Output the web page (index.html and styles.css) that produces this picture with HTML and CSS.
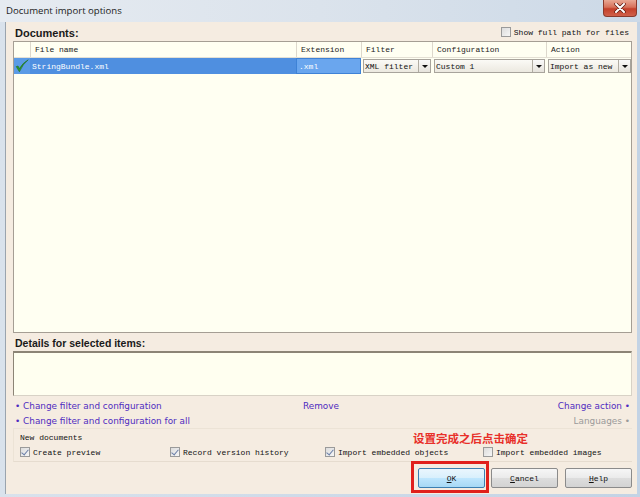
FILE: index.html
```html
<!DOCTYPE html>
<html>
<head>
<meta charset="utf-8">
<link rel="stylesheet" href="styles.css">
</head>
<body>
<div class="window">
  <div class="titlebar">
    <span class="title">Document import options</span>
    <div class="close">
      <svg width="14" height="10" viewBox="0 0 14 10"><path d="M3 1 L11 9 M11 1 L3 9" stroke="#5a1a10" stroke-width="3.4" stroke-linecap="round"/><path d="M3 1 L11 9 M11 1 L3 9" stroke="#fff" stroke-width="2" stroke-linecap="round"/></svg>
    </div>
  </div>
  <div class="client">
    <div class="docs-head">
      <span class="section-label">Documents:</span>
      <span class="chk"><span class="box"></span><span class="mono">Show full path for files</span></span>
    </div>
    <div class="table">
      <div class="row thead">
        <div class="cell"></div>
        <div class="cell"><span class="hd">File name</span></div>
        <div class="cell"><span class="hd">Extension</span></div>
        <div class="cell"><span class="hd">Filter</span></div>
        <div class="cell"><span class="hd">Configuration</span></div>
        <div class="cell"><span class="hd">Action</span></div>
      </div>
      <div class="row sel">
        <div class="cell icon">
          <svg width="14" height="14" viewBox="0 0 14 14"><path d="M1.2 7.6 L4.4 12.8 Q7.8 5 13.2 0.8 Q7.4 4.2 4.5 9.6 L3 7 Z" fill="#2f9a2a" stroke="#1f6e1c" stroke-width="0.6"/></svg>
        </div>
        <div class="cell name"><span class="mono">StringBundle.xml</span></div>
        <div class="cell ext"><span class="mono">.xml</span></div>
        <div class="cell"><div class="combo"><span class="mono">XML filter</span><span class="arrow"></span></div></div>
        <div class="cell"><div class="combo"><span class="mono">Custom 1</span><span class="arrow"></span></div></div>
        <div class="cell"><div class="combo"><span class="mono">Import as new</span><span class="arrow"></span></div></div>
      </div>
    </div>
    <div class="details-label section-label">Details for selected items:</div>
    <div class="details"></div>
    <div class="links">
      <div class="link-row">
        <span class="link">• Change filter and configuration</span>
        <span class="link remove">Remove</span>
        <span class="link right">Change action •</span>
      </div>
      <div class="link-row">
        <span class="link">• Change filter and configuration for all</span>
        <span class="link right muted">Languages •</span>
      </div>
    </div>
    <div class="group">
      <div class="group-title mono">New documents</div>
      <div class="group-row">
        <span class="chk c1"><span class="box on"></span><span class="mono">Create preview</span></span>
        <span class="chk c2"><span class="box on"></span><span class="mono">Record version history</span></span>
        <span class="chk c3"><span class="box on"></span><span class="mono">Import embedded objects</span></span>
        <span class="chk c4"><span class="box"></span><span class="mono">Import embedded images</span></span>
      </div>
    </div>
    <div class="buttons">
      <div class="btn default"><span class="mono"><u>O</u>K</span></div>
      <div class="btn"><span class="mono"><u>C</u>ancel</span></div>
      <div class="btn"><span class="mono"><u>H</u>elp</span></div>
    </div>
  </div>
  <div class="note">设置完成之后点击确定</div>
  <div class="redbox"></div>
</div>
</body>
</html>
```
FILE: styles.css
```css
html, body {
  margin: 0;
  padding: 0;
}
body {
  width: 640px;
  height: 497px;
  overflow: hidden;
  background: #c9d6e4;
}
.window {
  position: relative;
  width: 640px;
  height: 497px;
  background: linear-gradient(to right, #d9e2ec, #c3d3e5);
  display: flex;
  flex-direction: column;
}
.titlebar {
  height: 22px;
  display: flex;
  align-items: flex-start;
  justify-content: space-between;
  background: linear-gradient(to right, #e6ebf1 0%, #dbe3ec 50%, #ccd9e7 100%);
}
.title {
  font-family: "Open Sans", "DejaVu Sans", sans-serif;
  font-size: 9.6px;
  color: #1c1c1c;
  margin: 4px 0 0 6px;
}
.close {
  width: 34px;
  height: 17px;
  margin-right: 3px;
  box-sizing: border-box;
  border: 1px solid #8a3a2c;
  border-top: none;
  border-radius: 0 0 4px 4px;
  background: linear-gradient(to bottom, #e9a894 0%, #d7715a 45%, #c4402a 55%, #d0604a 100%);
  display: flex;
  align-items: center;
  justify-content: center;
}
.client {
  flex: 1;
  margin: 0 3px 3px 5px;
  padding: 0 5px 0 7px;
  background: #f5ece1;
  border-left: 1px solid #9aa4ae;
  display: flex;
  flex-direction: column;
  box-sizing: border-box;
}
.mono {
  font-family: "Liberation Mono", "DejaVu Sans Mono", monospace;
  font-size: 8px;
  color: #111;
  white-space: pre;
}
.section-label {
  font-family: "Liberation Sans", Arial, sans-serif;
  font-weight: bold;
  font-size: 11px;
  color: #1a1a1a;
}
.docs-head {
  height: 19px;
  display: flex;
  align-items: center;
  justify-content: space-between;
  padding: 0 0 0 2px;
}
.docs-head .section-label {
  margin-top: 2px;
}
.docs-head .chk {
  margin-right: 3px;
  margin-top: 1px;
}
.chk {
  display: inline-flex;
  align-items: center;
  gap: 3px;
}
.box {
  width: 10px;
  height: 10px;
  box-sizing: border-box;
  border: 1px solid #9a9a9a;
  background: linear-gradient(135deg, #dcdcdc, #f6f6f6);
  position: relative;
}
.box.on::after {
  content: "";
  position: absolute;
  left: 2px;
  top: 0px;
  width: 3px;
  height: 6px;
  border: solid #6b7fa8;
  border-width: 0 1.5px 1.5px 0;
  transform: rotate(40deg);
}
.table {
  height: 292px;
  box-sizing: border-box;
  border: 1px solid #a59e94;
  background: #fffff2;
}
.row {
  display: grid;
  grid-template-columns: 16px 266px 65px 71px 114px 86px;
}
.thead {
  height: 15px;
  border-bottom: 1px solid #e4e0d4;
}
.thead .cell {
  border-left: 1px solid #ddd8cc;
  display: flex;
  align-items: center;
}
.thead .cell:first-child {
  border-left: none;
}
.hd {
  font-family: "Liberation Mono", monospace;
  font-size: 8px;
  color: #222;
  padding-left: 4px;
}
.sel {
  height: 16px;
}
.sel .cell {
  display: flex;
  align-items: center;
}
.sel .icon,
.sel .name {
  background: #4f8fe0;
}
.sel .icon {
  justify-content: center;
  background: #5b9be6;
}
.sel .name .mono {
  color: #fff;
  padding-left: 2px;
}
.sel .ext {
  background: #6aa6ee;
  border: 1px solid #3e82d6;
  box-sizing: border-box;
}
.sel .ext .mono {
  color: #fff;
  padding-left: 2px;
}
.combo {
  flex: 1;
  height: 14px;
  margin: 0 1px 0 2px;
  box-sizing: border-box;
  border: 1px solid #a8a49c;
  background: linear-gradient(to bottom, #fbfaf6, #ece9e0);
  display: flex;
  align-items: center;
  justify-content: space-between;
}
.combo .mono {
  padding-left: 1px;
}
.arrow {
  width: 11px;
  height: 12px;
  border-left: 1px solid #b0aca2;
  background: linear-gradient(to bottom, #fafafa, #e6e3dc);
  position: relative;
}
.arrow::after {
  content: "";
  position: absolute;
  left: 3px;
  top: 5px;
  border-left: 3px solid transparent;
  border-right: 3px solid transparent;
  border-top: 3px solid #111;
}
.details-label {
  height: 18px;
  display: flex;
  align-items: center;
  padding: 2px 0 0 2px;
  box-sizing: border-box;
  font-size: 10.5px;
}
.details {
  height: 45px;
  box-sizing: border-box;
  border: 1px solid #d8d2c6;
  border-top: 2px solid #8c8476;
  border-left: 1px solid #8c8476;
  background: #fffff0;
}
.links {
  display: flex;
  flex-direction: column;
  padding-top: 2px;
}
.link-row {
  height: 15px;
  display: grid;
  grid-template-columns: 288px 1fr auto;
  align-items: center;
}
.link {
  font-family: "DejaVu Sans", Verdana, sans-serif;
  font-size: 8.9px;
  color: #4f2bc0;
  padding-left: 2px;
  white-space: nowrap;
}
.link.right {
  grid-column: 3;
  padding-right: 2px;
}
.link.muted {
  color: #9a9a9a;
}
.group {
  height: 34px;
  box-sizing: border-box;
  border-top: 1px solid #ece3d6;
  border-bottom: 1px solid #e6dccf;
  border-left: 1px solid #ece3d6;
  padding: 2px 0 0 6px;
  display: flex;
  flex-direction: column;
}
.group-title {
  height: 13px;
  line-height: 13px;
}
.group-row {
  display: flex;
  align-items: center;
  height: 16px;
}
.group-row .c1 { width: 150px; }
.group-row .c2 { width: 155px; }
.group-row .c3 { width: 158px; }
.buttons {
  flex: 1;
  display: flex;
  justify-content: flex-end;
  align-items: flex-start;
  padding-top: 6px;
  gap: 6px;
}
.btn {
  width: 67px;
  height: 20px;
  box-sizing: border-box;
  border: 1px solid #8b8b8b;
  border-radius: 2px;
  background: linear-gradient(to bottom, #f6f6f6 0%, #ebebeb 48%, #dddddd 52%, #d3d3d3 100%);
  display: flex;
  align-items: center;
  justify-content: center;
}
.btn.default {
  border-color: #3c7fb1;
  background: linear-gradient(to bottom, #eaf6fd 0%, #d9f0fc 48%, #bee6fd 52%, #a7d9f5 100%);
}
.btn:last-child {
  margin-left: 1px;
}
.note {
  position: absolute;
  left: 413px;
  top: 430px;
  font-family: "Noto Sans CJK SC", sans-serif;
  font-weight: bold;
  font-size: 11.5px;
  line-height: 16px;
  color: #e8302a;
}
.redbox {
  position: absolute;
  left: 411px;
  top: 461px;
  width: 78px;
  height: 32px;
  box-sizing: border-box;
  border: 3px solid #e0201c;
}
```
